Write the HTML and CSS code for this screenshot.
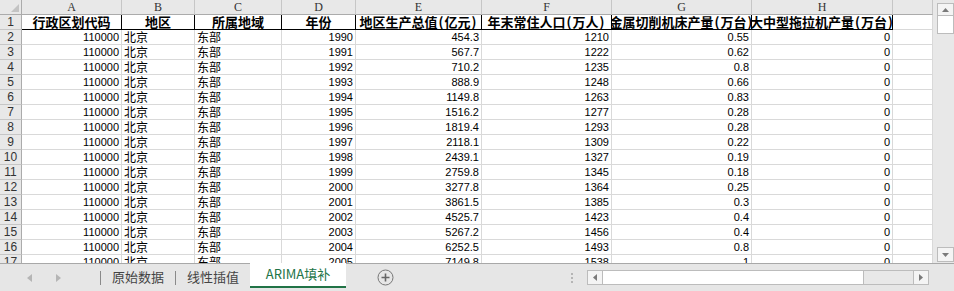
FILE: index.html
```html
<!DOCTYPE html>
<html lang="zh-CN">
<head>
    <meta charset="UTF-8">
    <title>ARIMA填补</title>
    <link rel="stylesheet" href="styles.css">
</head>
<body>

<div class="app">
    <div class="main">
        <div class="sheet" id="sheet">
            <div class="row">
                <div class="corner">
                    <svg width="8" height="8" viewBox="0 0 8 8"><path d="M8 0 L8 8 L0 8 Z" fill="#c3c3c3"/></svg>
                </div>
                <div class="colh">A</div>
                <div class="colh">B</div>
                <div class="colh">C</div>
                <div class="colh">D</div>
                <div class="colh">E</div>
                <div class="colh">F</div>
                <div class="colh">G</div>
                <div class="colh">H</div>
                <div class="colh"></div>
            </div>
            <div class="row">
                <div class="rowh">1</div>
                <div class="cell hdr"><span>行政区划代码</span></div>
                <div class="cell hdr"><span>地区</span></div>
                <div class="cell hdr"><span>所属地域</span></div>
                <div class="cell hdr"><span>年份</span></div>
                <div class="cell hdr"><span>地区生产总值<i>(</i>亿元<i>)</i></span></div>
                <div class="cell hdr"><span>年末常住人口<i>(</i>万人<i>)</i></span></div>
                <div class="cell hdr"><span>金属切削机床产量<i>(</i>万台<i>)</i></span></div>
                <div class="cell hdr"><span>大中型拖拉机产量<i>(</i>万台<i>)</i></span></div>
                <div class="cell"></div>
            </div>
        </div>
        <div class="vscroll">
            <div class="sbtn"><svg width="7" height="4" viewBox="0 0 7 4"><path d="M0 4 L3.5 0 L7 4 Z" fill="#7a7a7a"/></svg></div>
            <div class="vthumb"></div>
            <div class="sbtn down"><svg width="7" height="4" viewBox="0 0 7 4"><path d="M0 0 L3.5 4 L7 0 Z" fill="#7a7a7a"/></svg></div>
        </div>
    </div>

    <div class="tabbar">
        <div class="nav">
            <svg width="5" height="8" viewBox="0 0 5 8"><path d="M5 0 L0 4 L5 8 Z" fill="#b5b5b5"/></svg>
            <svg width="5" height="8" viewBox="0 0 5 8"><path d="M0 0 L5 4 L0 8 Z" fill="#b5b5b5"/></svg>
        </div>
        <div class="sep"></div>
        <div class="tab">原始数据</div>
        <div class="sep"></div>
        <div class="tab">线性插值</div>
        <div class="tab active">ARIMA填补</div>
        <div class="addsheet">
            <svg width="17" height="17" viewBox="0 0 17 17">
                <circle cx="8.5" cy="8.5" r="7.5" fill="none" stroke="#777" stroke-width="1"/>
                <path d="M8.5 4.5 V12.5 M4.5 8.5 H12.5" stroke="#666" stroke-width="1.6"/>
            </svg>
        </div>
        <div class="grip">
            <span></span><span></span><span></span>
        </div>
        <div class="hscroll">
            <div class="hbtn"><svg width="4" height="7" viewBox="0 0 4 7"><path d="M4 0 L0 3.5 L4 7 Z" fill="#7a7a7a"/></svg></div>
            <div class="hthumb"></div>
            <div class="htrack"></div>
            <div class="hbtn"><svg width="4" height="7" viewBox="0 0 4 7"><path d="M0 0 L4 3.5 L0 7 Z" fill="#7a7a7a"/></svg></div>
        </div>
    </div>
</div>

<script>
    const data = [
        [1990, "454.3", 1210, "0.55"],
        [1991, "567.7", 1222, "0.62"],
        [1992, "710.2", 1235, "0.8"],
        [1993, "888.9", 1248, "0.66"],
        [1994, "1149.8", 1263, "0.83"],
        [1995, "1516.2", 1277, "0.28"],
        [1996, "1819.4", 1293, "0.28"],
        [1997, "2118.1", 1309, "0.22"],
        [1998, "2439.1", 1327, "0.19"],
        [1999, "2759.8", 1345, "0.18"],
        [2000, "3277.8", 1364, "0.25"],
        [2001, "3861.5", 1385, "0.3"],
        [2002, "4525.7", 1423, "0.4"],
        [2003, "5267.2", 1456, "0.4"],
        [2004, "6252.5", 1493, "0.8"],
        [2005, "7149.8", 1538, "1"]
    ];

    const sheet = document.getElementById("sheet");

    data.forEach((entry, index) => {
        const [year, gdp, pop, lathe] = entry;
        const row = document.createElement("div");
        row.className = "row";
        row.innerHTML = `
            <div class="rowh">${index + 2}</div>
            <div class="cell num">110000</div>
            <div class="cell txt">北京</div>
            <div class="cell txt">东部</div>
            <div class="cell num">${year}</div>
            <div class="cell num">${gdp}</div>
            <div class="cell num">${pop}</div>
            <div class="cell num">${lathe}</div>
            <div class="cell num">0</div>
            <div class="cell"></div>
        `;
        sheet.appendChild(row);
    });
</script>

</body>
</html>
```

FILE: styles.css
```css
body {
    margin: 0;
    font-family: "Noto Sans CJK SC", sans-serif;
    background-color: #fff;
    overflow: hidden;
}

.app {
    width: 954px;
    height: 291px;
    display: flex;
    flex-direction: column;
}

.main {
    display: flex;
    height: 263px;
}

/* grid */

.sheet {
    width: 933px;
    overflow: hidden;
}

.row {
    display: grid;
    grid-template-columns: 22px 100px 73px 87px 74px 126px 130px 140px 141px 40px;
    height: 15px;
}

.row > div {
    box-sizing: border-box;
    height: 15px;
    overflow: hidden;
    white-space: nowrap;
}

.corner {
    background-color: #e8e8e8;
    border-right: 1px solid #ababab;
    border-bottom: 1px solid #ababab;
    display: flex;
    align-items: flex-end;
    justify-content: flex-end;
    padding: 0 2px 2px 0;
}

.corner svg {
    display: block;
}

.colh {
    background-color: #e8e8e8;
    border-right: 1px solid #c6c6c6;
    border-bottom: 1px solid #ababab;
    text-align: center;
    font-family: "Liberation Serif", serif;
    font-size: 12px;
    line-height: 14px;
    color: #333;
}

.rowh {
    background-color: #e8e8e8;
    border-right: 1px solid #ababab;
    border-bottom: 1px solid #c6c6c6;
    text-align: center;
    font-family: "Liberation Sans", sans-serif;
    font-size: 12px;
    line-height: 14px;
    color: #333;
}

.cell {
    border-right: 1px solid #d9d9d9;
    border-bottom: 1px solid #d9d9d9;
    padding: 0 2px;
    line-height: 14px;
    color: #000;
}

.hdr {
    display: flex;
    justify-content: center;
    border-right-color: #000;
    border-bottom-color: #000;
    font-weight: 700;
    font-size: 13px;
    padding: 0;
}

.hdr i {
    font-style: normal;
    padding: 0 1px;
}

.num {
    text-align: right;
    font-family: "Liberation Sans", sans-serif;
    font-size: 11px;
    font-variant-numeric: tabular-nums;
}

.txt {
    font-size: 12px;
}

/* vertical scrollbar */

.vscroll {
    width: 21px;
    background-color: #e8e8e8;
    display: flex;
    flex-direction: column;
    align-items: center;
    padding: 3px 0 1px 3px;
    box-sizing: border-box;
}

.sbtn {
    width: 17px;
    height: 13px;
    box-sizing: border-box;
    border: 1px solid #bcbcbc;
    background-color: #f4f4f4;
    display: flex;
    align-items: center;
    justify-content: center;
}

.sbtn.down {
    margin-top: auto;
    height: 15px;
}

.vthumb {
    width: 17px;
    height: 18px;
    box-sizing: border-box;
    border: 1px solid #bcbcbc;
    border-top: none;
    background-color: #fff;
}

/* sheet tabs */

.tabbar {
    height: 28px;
    box-sizing: border-box;
    background-color: #e6e6e6;
    border-top: 1px solid #a8a8a8;
    display: flex;
    align-items: center;
    font-size: 13px;
    color: #444;
}

.nav {
    width: 100px;
    display: flex;
    gap: 24px;
    padding-left: 27px;
    box-sizing: border-box;
}

.sep {
    width: 1px;
    height: 14px;
    background-color: #8a8a8a;
}

.tab {
    padding: 0 11px 0 11px;
    line-height: 20px;
    margin-top: -2px;
}

.tab.active {
    align-self: flex-start;
    margin-top: -1px;
    width: 96px;
    height: 25px;
    box-sizing: border-box;
    padding: 0;
    text-align: center;
    line-height: 22px;
    background-color: #fff;
    color: #217346;
    border-bottom: 2px solid #217346;
}

.addsheet {
    margin-left: 31px;
    display: flex;
}

.grip {
    margin-left: 177px;
    display: flex;
    flex-direction: column;
    gap: 2px;
}

.grip span {
    width: 2px;
    height: 2px;
    background-color: #b5b5b5;
}

.hscroll {
    margin-left: 14px;
    width: 342px;
    height: 15px;
    display: flex;
    box-sizing: border-box;
    border: 1px solid #bcbcbc;
    background-color: #e8e8e8;
}

.hbtn {
    width: 14px;
    display: flex;
    align-items: center;
    justify-content: center;
    background-color: #f4f4f4;
}

.hthumb {
    width: 260px;
    background-color: #fff;
    border-left: 1px solid #bcbcbc;
    border-right: 1px solid #bcbcbc;
}

.htrack {
    flex: 1;
    border-right: 1px solid #bcbcbc;
}
```
